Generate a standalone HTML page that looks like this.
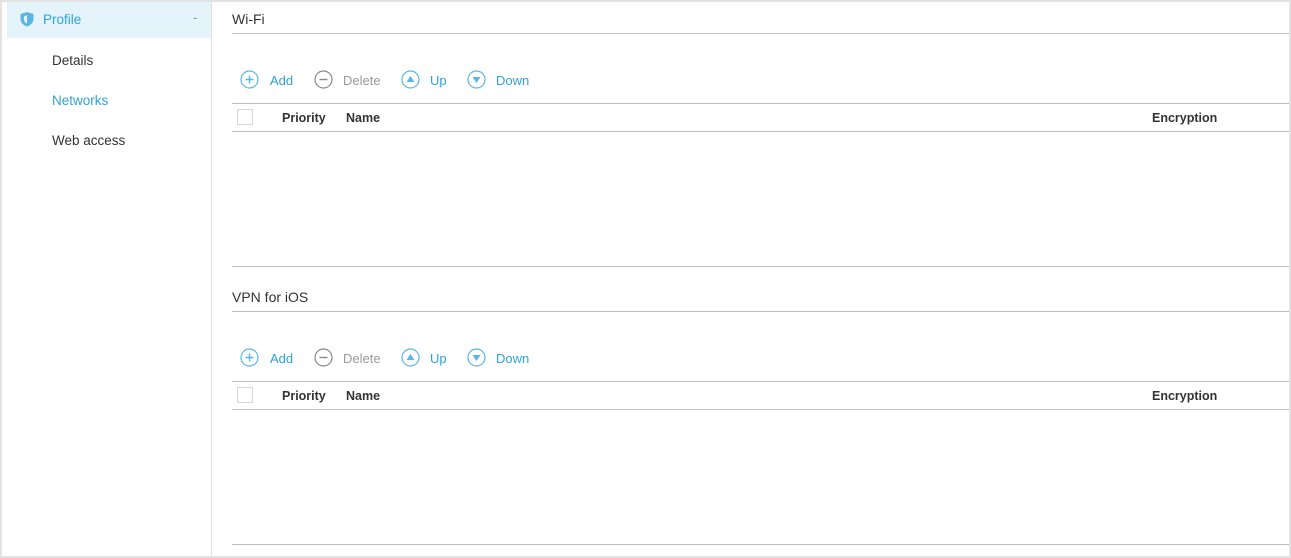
<!DOCTYPE html>
<html><head><style>
*{margin:0;padding:0;box-sizing:border-box}
body{width:1291px;height:558px;background:#fff;font-family:"Liberation Sans",Tahoma,sans-serif;font-size:13px;color:#333;position:relative;overflow:hidden}
.frame{position:absolute;left:0;top:0;width:1291px;height:558px;border:2px solid #e2e2e2}
.side{position:absolute;left:2px;top:2px;width:210px;height:554px;border-right:1px solid #e0e0e0}
.prof{position:absolute;left:5px;top:0;width:204px;height:36px;background:#e5f3fa;color:#2ea3dc;font-size:13.5px}
.a{position:absolute}
.hl{position:absolute;left:232px;right:2px;height:1px;background:#bdbdbd}
.blue{color:#2ea3dc}
.gray{color:#999}
.th{font-weight:bold;font-size:12.5px;color:#333}
.cb{position:absolute;width:16px;height:16px;border:1px solid #d6d6d6;background:#fff}
.m{font-size:13.5px}
</style></head><body>
<div class="frame"></div>
<div class="side">
 <div class="prof">
  <svg class="a" style="left:12px;top:9px" width="16" height="17" viewBox="0 0 16 17"><path d="M8 1 L14.5 3 V8 C14.5 11.5 11.5 14.5 8 15.5 C4.5 14.5 1.5 11.5 1.5 8 V3 Z" fill="#5bb6e4"/><path d="M8 4 L5 5.5 V8.5 C5 10.5 6.3 11.8 8 12.5 Z" fill="#e5f3fa"/></svg>
  <span class="a" style="left:36px;top:10px">Profile</span>
  <span class="a" style="left:186px;top:8px;color:#999">-</span>
 </div>
 <span class="a m" style="left:50px;top:51px">Details</span>
 <span class="a blue m" style="left:50px;top:91px">Networks</span>
 <span class="a m" style="left:50px;top:131px">Web access</span>
</div>

<span class="a" style="left:232px;top:11px;font-size:14px">Wi-Fi</span>
<div class="hl" style="top:33px"></div>
<div class="a" style="top:70px;left:240px;width:300px;height:20px">
 <svg class="a" style="left:0;top:0" width="19" height="19"><circle cx="9.5" cy="9.5" r="8.5" fill="none" stroke="#5bb6e4" stroke-width="1.2"/><path d="M9.5 5.5v8M5.5 9.5h8" stroke="#5bb6e4" stroke-width="1.4"/></svg>
 <span class="a blue" style="left:30px;top:3px">Add</span>
 <svg class="a" style="left:74px;top:0" width="19" height="19"><circle cx="9.5" cy="9.5" r="8.5" fill="none" stroke="#888" stroke-width="1.2"/><path d="M5.5 9.5h8" stroke="#888" stroke-width="1.4"/></svg>
 <span class="a gray" style="left:103px;top:3px">Delete</span>
 <svg class="a" style="left:161px;top:0" width="19" height="19"><circle cx="9.5" cy="9.5" r="8.5" fill="none" stroke="#5bb6e4" stroke-width="1.2"/><path d="M5.5 12h8L9.5 6z" fill="#5bb6e4"/></svg>
 <span class="a blue" style="left:190px;top:3px">Up</span>
 <svg class="a" style="left:227px;top:0" width="19" height="19"><circle cx="9.5" cy="9.5" r="8.5" fill="none" stroke="#5bb6e4" stroke-width="1.2"/><path d="M5.5 7h8L9.5 13z" fill="#5bb6e4"/></svg>
 <span class="a blue" style="left:256px;top:3px">Down</span>
</div>
<div class="hl" style="top:103px"></div>
<div class="cb" style="left:237px;top:109px"></div>
<span class="a th" style="left:282px;top:111px">Priority</span>
<span class="a th" style="left:346px;top:111px">Name</span>
<span class="a th" style="left:1152px;top:111px">Encryption</span>
<div class="hl" style="top:131px"></div>
<div class="hl" style="top:266px"></div>

<span class="a" style="left:232px;top:289px;font-size:14px">VPN for iOS</span>
<div class="hl" style="top:311px"></div>
<div class="a" style="top:348px;left:240px;width:300px;height:20px">
 <svg class="a" style="left:0;top:0" width="19" height="19"><circle cx="9.5" cy="9.5" r="8.5" fill="none" stroke="#5bb6e4" stroke-width="1.2"/><path d="M9.5 5.5v8M5.5 9.5h8" stroke="#5bb6e4" stroke-width="1.4"/></svg>
 <span class="a blue" style="left:30px;top:3px">Add</span>
 <svg class="a" style="left:74px;top:0" width="19" height="19"><circle cx="9.5" cy="9.5" r="8.5" fill="none" stroke="#888" stroke-width="1.2"/><path d="M5.5 9.5h8" stroke="#888" stroke-width="1.4"/></svg>
 <span class="a gray" style="left:103px;top:3px">Delete</span>
 <svg class="a" style="left:161px;top:0" width="19" height="19"><circle cx="9.5" cy="9.5" r="8.5" fill="none" stroke="#5bb6e4" stroke-width="1.2"/><path d="M5.5 12h8L9.5 6z" fill="#5bb6e4"/></svg>
 <span class="a blue" style="left:190px;top:3px">Up</span>
 <svg class="a" style="left:227px;top:0" width="19" height="19"><circle cx="9.5" cy="9.5" r="8.5" fill="none" stroke="#5bb6e4" stroke-width="1.2"/><path d="M5.5 7h8L9.5 13z" fill="#5bb6e4"/></svg>
 <span class="a blue" style="left:256px;top:3px">Down</span>
</div>
<div class="hl" style="top:381px"></div>
<div class="cb" style="left:237px;top:387px"></div>
<span class="a th" style="left:282px;top:389px">Priority</span>
<span class="a th" style="left:346px;top:389px">Name</span>
<span class="a th" style="left:1152px;top:389px">Encryption</span>
<div class="hl" style="top:409px"></div>
<div class="hl" style="top:544px"></div>
</body></html>
